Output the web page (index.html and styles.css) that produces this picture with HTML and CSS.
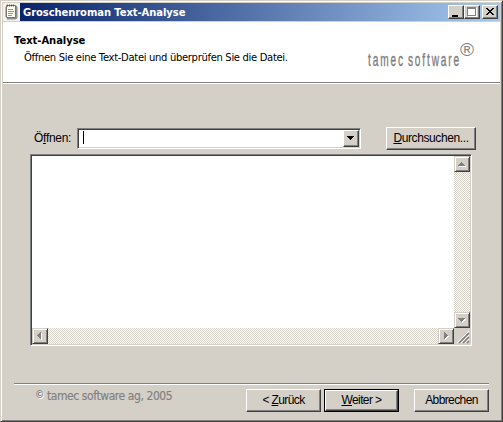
FILE: index.html
```html
<!DOCTYPE html>
<html lang="de">
<head>
<meta charset="utf-8">
<title>Groschenroman Text-Analyse</title>
<link rel="stylesheet" href="styles.css">
</head>
<body>
<div class="window">
  <div class="titlebar">
    <svg class="app-icon" width="17" height="18">
      <rect width="17" height="18" fill="#f4f3f0"/>
      <path d="M4 2.500H13Q14.500 3 14.500 5V14.500Q14 16.500 12 16.500H4Z" fill="#8b8d98"/>
      <path d="M3.500 2.500H12.500V14.500H3.500Z" fill="#fffef2" stroke="#77766f"/>
      <path d="M4 2.500H12" stroke="#55534f" stroke-width="2" stroke-dasharray="1 1"/>
      <path d="M5 6.500H10M5 8.500H11M5 10.500H10M5 12.500H9" stroke="#8c94a8"/>
      <path d="M2.500 4V14" stroke="#d9b95a"/>
    </svg>
    <div class="title-fill">
      <span class="title">Groschenroman Text-Analyse</span>
      <button class="btn caption"><svg width="14" height="12"><path d="M3 9H9V11H3Z"/></svg></button>
      <button class="btn caption"><svg width="14" height="12"><path d="M3 2H12V11H3Z" fill="#fff"/><path d="M2 1H11V10H2ZM3 3V9H10V3Z" fill="#808080" fill-rule="evenodd"/></svg></button>
      <button class="btn caption close"><svg width="14" height="12"><path d="M3 2H5V3H6V4H8V3H9V2H11V3H10V4H9V5H8V6H9V7H10V8H11V9H9V8H8V7H6V8H5V9H3V8H4V7H5V6H6V5H5V4H4V3H3Z"/></svg></button>
    </div>
  </div>
  <header class="banner">
    <div>
      <h1>Text-Analyse</h1>
      <p>Öffnen Sie eine Text-Datei und überprüfen Sie die Datei.</p>
    </div>
    <svg class="logo" width="110" height="30">
      <text class="logo-name" x="0" y="23" textLength="93" lengthAdjust="spacingAndGlyphs">tamec software</text>
      <text class="logo-mark" x="92" y="13" textLength="14" lengthAdjust="spacingAndGlyphs">®</text>
    </svg>
  </header>
  <main>
    <div class="file-row">
      <label class="open">Ö<u>f</u>fnen:</label>
      <div class="combo"><i class="caret"></i><button class="btn drop"><svg width="12" height="13"><path d="M2 4H9V5H8V6H7V7H6V8H5V7H4V6H3V5H2Z"/></svg></button></div>
      <button class="btn push browse"><span><u>D</u>urchsuchen...</span></button>
    </div>
    <div class="editor">
      <div class="page"></div>
      <div class="track vertical">
        <button class="btn scroll"><svg width="14" height="14"><path class="lit" d="M4 9H11V10H4Z"/><path d="M6 5H7V6H8V7H9V8H10V9H3V8H4V7H5V6H6Z"/></svg></button>
        <button class="btn scroll"><svg width="14" height="14"><path class="lit" d="M4 6H11V7H10V8H9V9H8V10H7V9H6V8H5V7H4Z"/><path d="M3 5H10V6H9V7H8V8H7V9H6V8H5V7H4V6H3Z"/></svg></button>
      </div>
      <div class="track horizontal">
        <button class="btn scroll"><svg width="14" height="14"><path class="lit" d="M8 4H9V11H8Z"/><path d="M7 3H8V10H7V9H6V8H5V7H4V6H5V5H6V4H7Z"/></svg></button>
        <button class="btn scroll"><svg width="14" height="14"><path class="lit" d="M6 4H7V5H8V6H9V7H10V8H9V9H8V10H7V11H6Z"/><path d="M5 3H6V4H7V5H8V6H9V7H8V8H7V9H6V10H5Z"/></svg></button>
      </div>
      <svg class="grip" width="16" height="16"><path d="M5 15L15 5M9 15L15 9M13 15L15 13" stroke="#808080" stroke-width="1.700"/><path d="M3 15L15 3M7 15L15 7M11 15L15 11" stroke="#fff"/></svg>
    </div>
  </main>
  <footer>
    <p class="copyright"><span class="copy">©</span><span class="firm">tamec software ag, 2005</span></p>
    <button class="btn push"><span>&lt; <u>Z</u>urück</span></button>
    <div class="default"><button class="btn push"><span><u>W</u>eiter &gt;</span></button></div>
    <button class="btn push"><span>Abbrechen</span></button>
  </footer>
</div>
</body>
</html>
```
FILE: styles.css
```css
* { box-sizing: border-box; }
body { margin: 0; width: 503px; height: 422px; overflow: hidden; background: #d4d0c8; font: 12px "Liberation Sans", sans-serif; color: #000; }
svg { display: block; flex: none; }
h1, p { margin: 0; }
.window { width: 503px; height: 422px; padding: 1px; border: 1px solid; border-color: #d4d0c8 #404040 #404040 #d4d0c8; box-shadow: inset 1px 1px #fff, inset -1px -1px #808080; display: flex; flex-direction: column; }
.titlebar { display: flex; height: 18px; margin: 1px 0 0 1px; width: 497px; flex: none; }
.title-fill { flex: 1; display: flex; align-items: center; padding: 0 2px 0 3px; background: linear-gradient(90deg, #0a246a, #a6caf0); }
.title { flex: 1; color: #fff; font: bold 10px "DejaVu Sans", sans-serif; letter-spacing: -.08px; white-space: nowrap; }
.btn { display: flex; align-items: center; justify-content: center; margin: 0; padding: 0; border: 1px solid; border-color: #fff #404040 #404040 #fff; border-radius: 0; background: #d4d0c8; box-shadow: inset -1px -1px #808080; color: #000; font: 12px "Liberation Sans", sans-serif; letter-spacing: -.6px; white-space: nowrap; flex: none; }
.caption { width: 16px; height: 14px; }
.close { margin-left: 2px; }
.banner { height: 61px; margin: 1px 0 0 1px; width: 497px; background: #fff; border-bottom: 1px solid #808080; padding: 11px 0 0 11px; display: flex; justify-content: space-between; box-shadow: 0 1px #fff; flex: none; }
.banner h1 { font: bold 10px/14px "DejaVu Sans", sans-serif; margin-top: 1px; letter-spacing: -.05px; }
.banner p { margin: 3px 0 0 10px; font: 10px/13px "DejaVu Sans", sans-serif; letter-spacing: -.32px; white-space: nowrap; }
.logo { margin: 10px 22px 0 0; overflow: visible; }
.logo text { font-family: "Liberation Sans", sans-serif; fill: #808080; }
.logo .logo-name { font-size: 19px; letter-spacing: 3.5px; word-spacing: -3px; stroke: #808080; stroke-width: .4px; }
.logo .logo-mark { font-size: 18px; }
main { padding: 44px 0 0 28px; flex: none; }
.file-row { display: flex; align-items: center; height: 23px; }
.open { width: 47px; padding: 0 0 2px 4px; letter-spacing: -.3px; }
.combo, .editor { border: 1px solid; border-color: #808080 #fff #fff #808080; box-shadow: inset 1px 1px #404040, inset -1px -1px #d4d0c8; background: #fff; }
.combo { width: 284px; height: 21px; padding: 1px; display: flex; }
.caret { width: 1px; height: 13px; margin: 1px 0 0 4px; background: #000; }
.drop { width: 16px; height: 17px; margin-left: auto; }
.push { width: 75px; height: 23px; padding-bottom: 1px; }
.browse { width: 90px; margin-left: 25px; letter-spacing: -.4px; }
.editor { width: 442px; height: 192px; margin-top: 4px; padding: 1px; display: grid; grid-template: 172px 16px / 422px 16px; }
.track { display: flex; justify-content: space-between; background: conic-gradient(#fff 25%, #d4d0c8 0 50%, #fff 0 75%, #d4d0c8 0) 0 0 / 2px 2px; }
.vertical { flex-direction: column; }
.scroll { width: 16px; height: 16px; border-color: #d4d0c8 #404040 #404040 #d4d0c8; box-shadow: inset 1px 1px #fff, inset -1px -1px #808080; }
.scroll path { fill: #808080; }
.scroll .lit { fill: #fff; }
.grip { background: #d4d0c8; }
footer { height: 31px; width: 475px; margin: 37px 0 0 12px; border-top: 1px solid #808080; box-shadow: inset 0 1px #fff; display: flex; padding-top: 5px; flex: none; }
.copyright { width: 232px; padding-left: 21px; color: #808080; display: flex; white-space: nowrap; }
.copy { width: 12px; font: bold 10px/12px "DejaVu Sans Condensed", sans-serif; text-shadow: 1px 1px #fff; }
.firm { font: 12px/14px "DejaVu Sans Condensed", sans-serif; letter-spacing: -.42px; -webkit-text-stroke: .15px #808080; }
.default { margin: 0 15px 0 3px; border: 1px solid #000; width: 75px; height: 23px; }
.default .push { width: 73px; height: 21px; }
```
